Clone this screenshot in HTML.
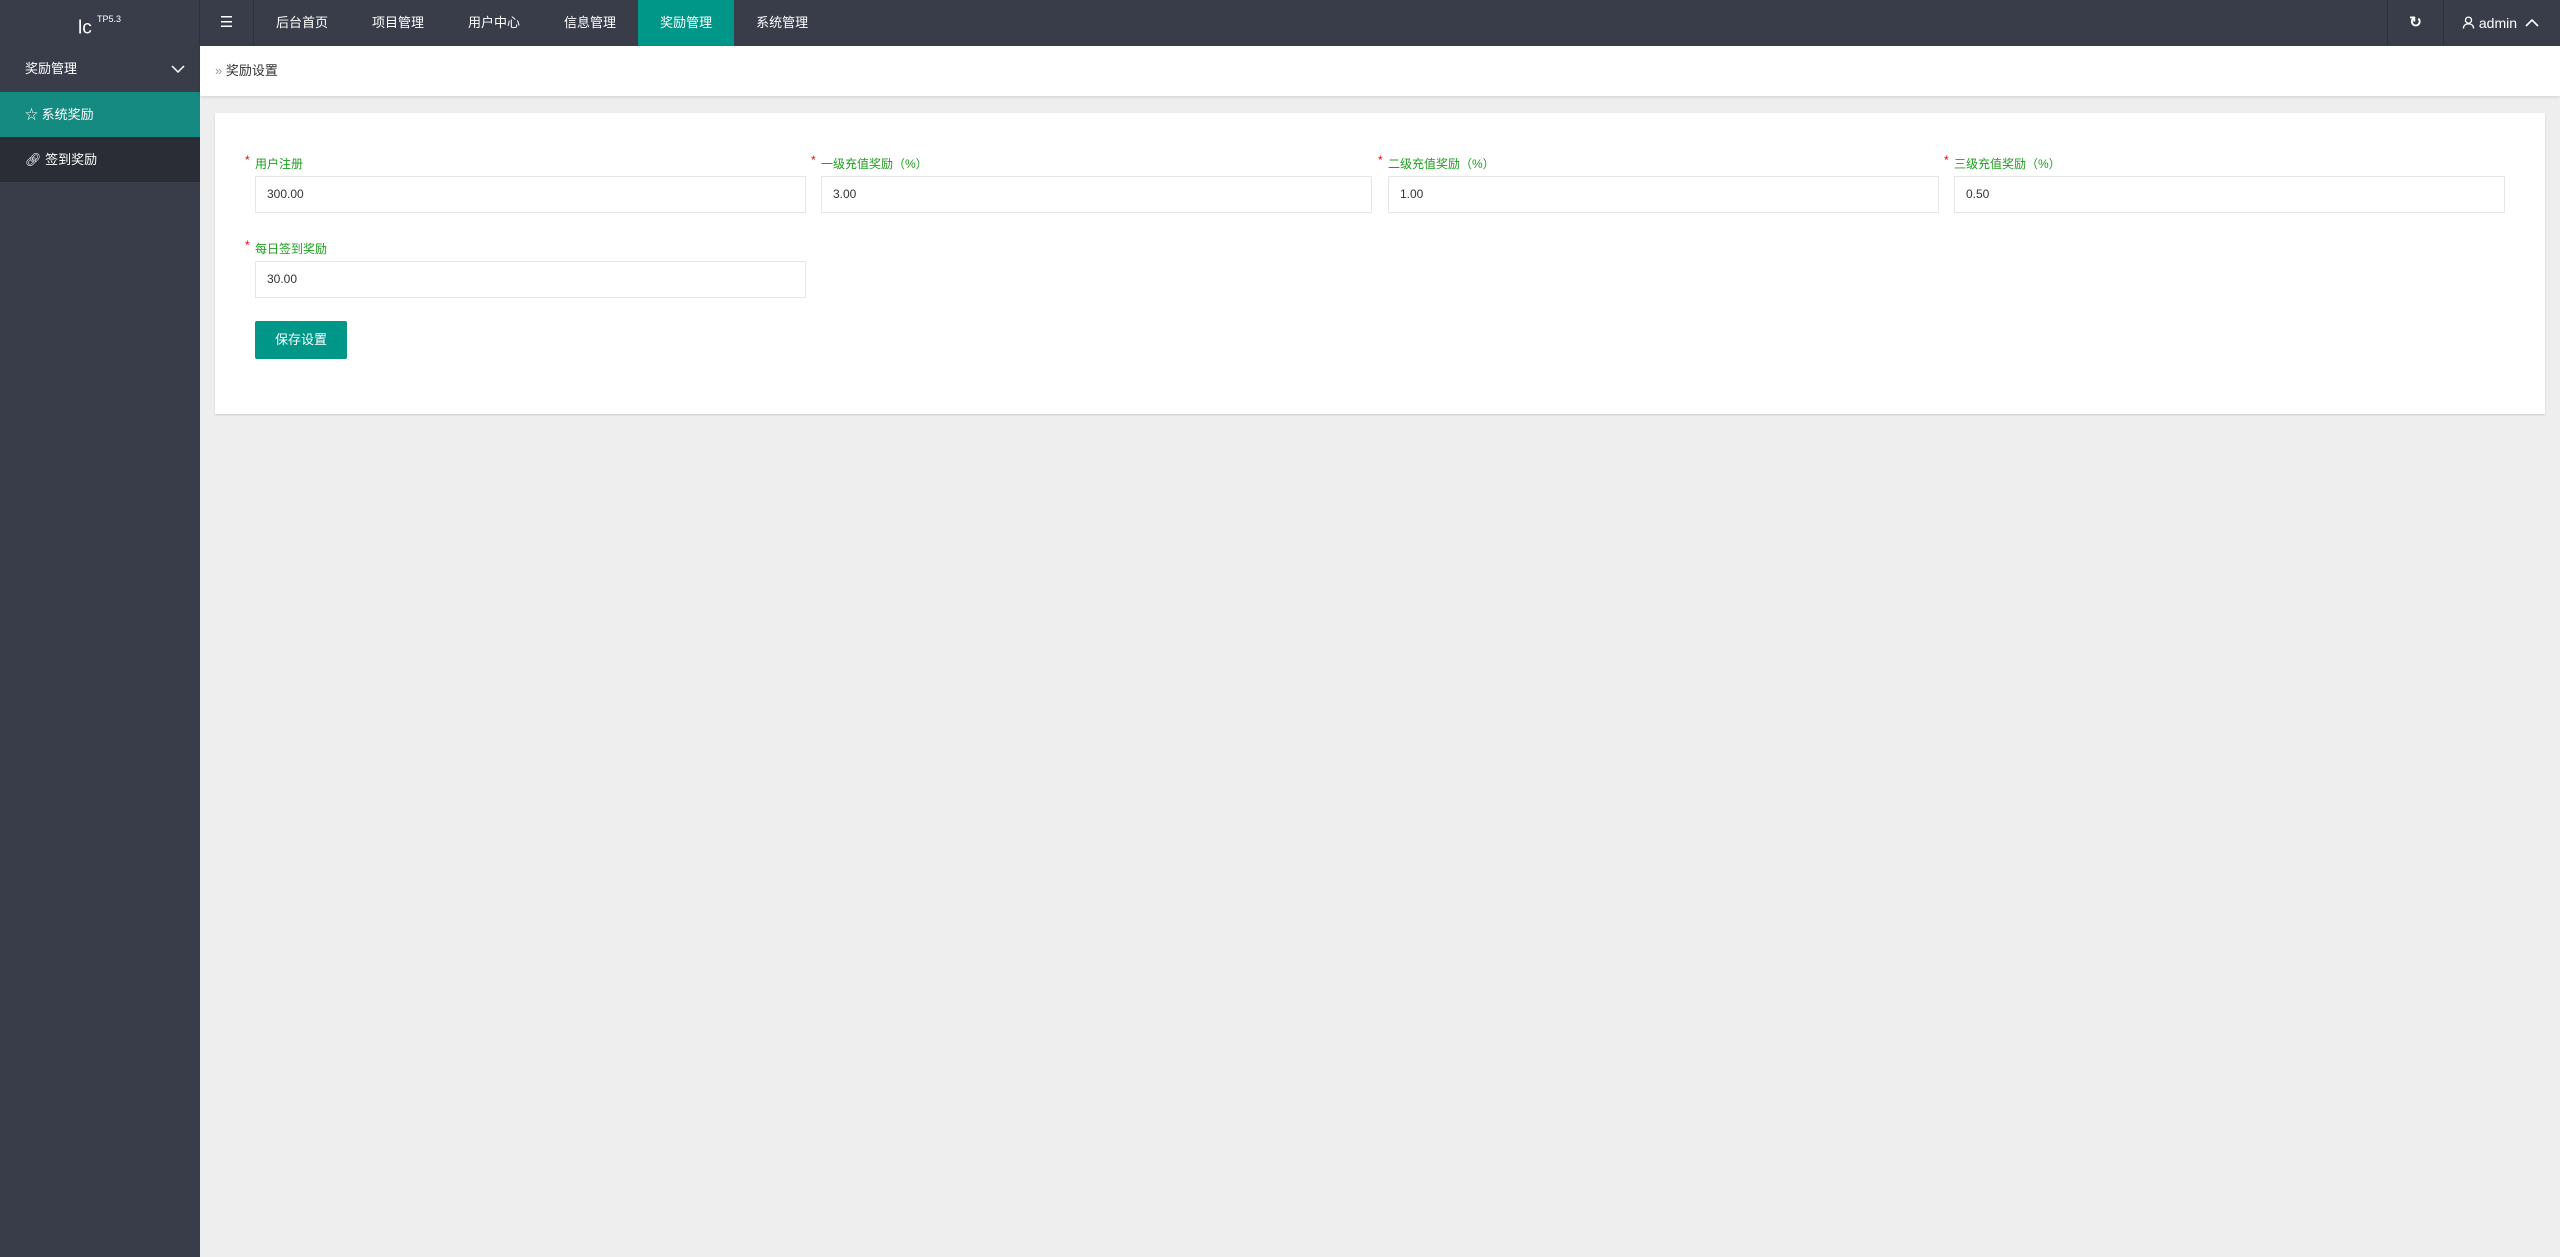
<!DOCTYPE html>
<html><head><meta charset="utf-8"><style>
*{margin:0;padding:0;box-sizing:border-box}
html,body{width:2560px;height:1257px;overflow:hidden;background:#eeeeee;font-family:"Liberation Sans","Noto Sans CJK SC",sans-serif}
.hd{position:absolute;left:0;top:0;width:2560px;height:46px;background:#393D49;color:#fff;font-size:13px}
.logo{position:absolute;left:0;top:0;width:200px;height:46px;text-align:center;line-height:46px;font-size:19px;color:#fff;border-right:1px solid #2f323c}
.logo sup{font-size:9px;position:relative;top:-4px}
.ham{position:absolute;left:200px;top:0;width:54px;height:46px;border-right:1px solid #2f323c;text-align:center;line-height:46px;font-size:15px}
.nav{position:absolute;left:254px;top:0;height:46px;display:flex}
.nav div{height:46px;line-height:46px;padding:0 22px;font-size:13px}
.nav .on{background:#009688}
.rf{position:absolute;left:2387px;top:0;width:57px;height:46px;border-left:1px solid #2f323c;border-right:1px solid #2f323c;text-align:center;line-height:46px;font-size:15px;font-weight:bold}
.ad{position:absolute;left:2462px;top:0;height:46px;line-height:46px;font-size:14px}
.sb{position:absolute;left:0;top:46px;width:200px;height:1211px;background:#393D49;color:#fff;font-size:13px}
.sb .t{height:46px;line-height:46px;padding-left:25px;position:relative}
.sb .a{height:45px;line-height:45px;padding-left:25px;background:#148a80}
.sb .b{height:45px;line-height:45px;padding-left:25px;background:#2a2d36}
.bc{position:absolute;left:200px;top:46px;width:2360px;height:50px;background:#fff;box-shadow:0 1px 3px rgba(0,0,0,.12);font-size:13px;line-height:50px;padding-left:15px;color:#333}
.card{position:absolute;left:215px;top:113px;width:2330px;height:301px;background:#fff;box-shadow:0 1px 2px rgba(0,0,0,.15)}
.lb{position:absolute;font-size:12px;color:#1e9e1e;height:16px;line-height:16px}
.lb b{color:#f00;font-weight:normal;position:absolute;left:-10px;top:-4px;font-size:12px}
.in{position:absolute;height:37px;border:1px solid #e6e6e6;font-size:12px;color:#333;line-height:35px;padding-left:11px;width:551px}
.btn{position:absolute;left:40px;top:208px;width:92px;height:38px;background:#009688;color:#fff;font-size:13px;line-height:38px;text-align:center;border-radius:2px}
</style></head><body>
<div class="hd">
<div class="logo">lc <sup>TP5.3</sup></div>
<div class="ham">☰</div>
<div class="nav"><div>后台首页</div><div>项目管理</div><div>用户中心</div><div>信息管理</div><div class="on">奖励管理</div><div>系统管理</div></div>
<div class="rf">↻</div>
<div class="ad"><svg width="13" height="13" viewBox="0 0 14 14" style="vertical-align:-1px"><circle cx="7" cy="4.5" r="3.3" fill="none" stroke="#fff" stroke-width="1.4"/><path d="M1.5 13.5c0-3.5 2.5-5 5.5-5s5.5 1.5 5.5 5" fill="none" stroke="#fff" stroke-width="1.4"/></svg> admin <svg width="14" height="10" viewBox="0 0 14 10" style="margin-left:4px"><path d="M1 8l6-6 6 6" fill="none" stroke="#fff" stroke-width="1.6"/></svg></div>
</div>
<div class="sb">
<div class="t">奖励管理<svg width="14" height="10" viewBox="0 0 14 10" style="position:absolute;left:171px;top:18px"><path d="M1 2l6 6 6-6" fill="none" stroke="#fff" stroke-width="1.5"/></svg></div>
<div class="a">☆ 系统奖励</div>
<div class="b">🔗︎ 签到奖励</div>
</div>
<div class="bc"><span style="color:#999">»</span> 奖励设置</div>
<div class="card">
<div class="lb" style="left:40px;top:43px"><b>*</b>用户注册</div>
<div class="lb" style="left:606px;top:43px"><b>*</b>一级充值奖励（%）</div>
<div class="lb" style="left:1173px;top:43px"><b>*</b>二级充值奖励（%）</div>
<div class="lb" style="left:1739px;top:43px"><b>*</b>三级充值奖励（%）</div>
<div class="in" style="left:40px;top:63px">300.00</div>
<div class="in" style="left:606px;top:63px">3.00</div>
<div class="in" style="left:1173px;top:63px">1.00</div>
<div class="in" style="left:1739px;top:63px">0.50</div>
<div class="lb" style="left:40px;top:128px"><b>*</b>每日签到奖励</div>
<div class="in" style="left:40px;top:148px">30.00</div>
<div class="btn">保存设置</div>
</div>
</body></html>
